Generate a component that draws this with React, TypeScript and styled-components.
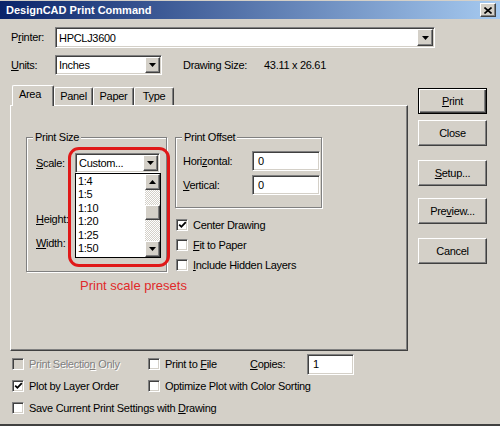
import React from "react";
import styled, { createGlobalStyle, css } from "styled-components";

const FACE = "#d4d0c8";

const GlobalStyle = createGlobalStyle`
  html, body { margin: 0; padding: 0; background: ${FACE}; }
  body {
    font-family: "Liberation Sans", Arial, sans-serif;
    font-size: 11px;
    letter-spacing: -0.3px;
    color: #000;
  }
  * { box-sizing: border-box; }
`;

const raised = css`
  background: ${FACE};
  border: 1px solid;
  border-color: #fff #404040 #404040 #fff;
  box-shadow: inset -1px -1px 0 #808080;
`;

const sunken = css`
  background: #fff;
  border: 1px solid;
  border-color: #808080 #fff #fff #808080;
  box-shadow: inset 1px 1px 0 #404040, inset -1px -1px 0 ${FACE};
`;

const Window = styled.div`
  width: 500px;
  height: 426px;
  display: flex;
  flex-direction: column;
  background: ${FACE};
  padding-top: 1px;
  border-bottom: 2px solid #404040;
  overflow: hidden;
`;

const TitleBar = styled.div`
  height: 18px;
  flex: none;
  display: flex;
  align-items: center;
  justify-content: space-between;
  padding: 0 4px 0 6px;
  background: linear-gradient(to right, #0a246a, #a6caf0);
  color: #fff;
  font-weight: bold;
  font-size: 11px;
  letter-spacing: 0;
`;

const CloseBtn = styled.div`
  ${raised};
  width: 16px;
  height: 14px;
  display: flex;
  align-items: center;
  justify-content: center;
`;

const Content = styled.div`
  display: flex;
  flex-direction: column;
  padding: 8px 0 0 10px;
`;

const FieldRow = styled.div<{ $h: number; $mt?: number }>`
  display: flex;
  align-items: center;
  height: ${(p) => p.$h}px;
  margin-top: ${(p) => p.$mt ?? 0}px;
`;

const Label = styled.span<{ $w?: number; $ml?: number; $disabled?: boolean }>`
  display: inline-block;
  flex: none;
  width: ${(p) => (p.$w ? `${p.$w}px` : "auto")};
  margin-left: ${(p) => p.$ml ?? 0}px;
  white-space: nowrap;
  line-height: 13px;
  ${(p) =>
    p.$disabled &&
    css`
      color: #808080;
      text-shadow: 1px 1px 0 #fff;
    `}
`;

const Key = styled.span`
  text-decoration: underline;
`;

const Combo = styled.div<{ $w: number; $h: number }>`
  ${sunken};
  position: relative;
  flex: none;
  width: ${(p) => p.$w}px;
  height: ${(p) => p.$h}px;
  padding: 1px;
  display: flex;
  align-items: stretch;
`;

const ComboText = styled.div`
  flex: 1;
  display: flex;
  align-items: center;
  padding-left: 2px;
  white-space: nowrap;
`;

const ArrowBtn = styled.div<{ $w?: number }>`
  ${raised};
  flex: none;
  width: ${(p) => p.$w ?? 16}px;
  display: flex;
  align-items: center;
  justify-content: center;
`;

const TextBox = styled.div<{ $w: number; $h: number }>`
  ${sunken};
  flex: none;
  width: ${(p) => p.$w}px;
  height: ${(p) => p.$h}px;
  padding-left: 5px;
  display: flex;
  align-items: center;
`;

const MainRow = styled.div`
  display: flex;
  margin-top: 10px;
`;

const TabControl = styled.div`
  width: 398px;
  display: flex;
  flex-direction: column;
`;

const TabStrip = styled.div`
  height: 20px;
  display: flex;
  align-items: flex-end;
  padding-left: 2px;
`;

const Tab = styled.div<{ $active?: boolean; $w: number }>`
  position: relative;
  z-index: ${(p) => (p.$active ? 2 : 1)};
  width: ${(p) => p.$w}px;
  height: ${(p) => (p.$active ? 21 : 18)}px;
  margin-bottom: ${(p) => (p.$active ? -1 : 0)}px;
  background: ${FACE};
  border: 1px solid;
  border-color: #fff #404040 transparent #fff;
  border-bottom: none;
  border-radius: 2px 2px 0 0;
  box-shadow: inset -1px 0 0 #808080;
  padding: 2px ${(p) => (p.$active ? 6 : 0)}px 0 0;
  text-align: center;
  line-height: 13px;
`;

const TabPanel = styled.div`
  height: 246px;
  background: ${FACE};
  border: 1px solid;
  border-color: #fff #404040 #404040 #fff;
  box-shadow: inset -1px -1px 0 #808080;
  padding: 31px 0 0 15px;
  display: flex;
  flex-direction: column;
`;

const GroupsRow = styled.div`
  display: flex;
  align-items: flex-start;
  gap: 8px;
`;

const Group = styled.div<{ $w: number; $h?: number; $pad: string }>`
  position: relative;
  width: ${(p) => p.$w}px;
  height: ${(p) => (p.$h ? `${p.$h}px` : "auto")};
  border: 1px solid #808080;
  box-shadow: 1px 1px 0 #fff, inset 1px 1px 0 #fff;
  padding: ${(p) => p.$pad};
  display: flex;
  flex-direction: column;
`;

const Legend = styled.span`
  position: absolute;
  top: -7px;
  left: 6px;
  padding: 0 2px;
  background: ${FACE};
  line-height: 13px;
  white-space: nowrap;
`;

const Column = styled.div`
  display: flex;
  flex-direction: column;
`;

const CheckList = styled.div<{ $mt: number; $ml: number }>`
  display: flex;
  flex-direction: column;
  margin-top: ${(p) => p.$mt}px;
  margin-left: ${(p) => p.$ml}px;
`;

const CheckRow = styled.div<{ $w?: number; $h?: number }>`
  display: flex;
  align-items: center;
  gap: 5px;
  height: ${(p) => p.$h ?? 20}px;
  width: ${(p) => (p.$w ? `${p.$w}px` : "auto")};
  flex: none;
`;

const Box = styled.div<{ $disabled?: boolean }>`
  ${sunken};
  flex: none;
  width: 12px;
  height: 12px;
  background: ${(p) => (p.$disabled ? FACE : "#fff")};
  display: flex;
  align-items: center;
  justify-content: center;
`;

const DropList = styled.div`
  position: absolute;
  z-index: 5;
  top: 19px;
  left: -1px;
  width: 86px;
  height: 85px;
  background: #fff;
  border: 1px solid #000;
  display: flex;
`;

const ListItems = styled.div`
  flex: 1;
  padding: 1px 0 0 2px;
`;

const ListItem = styled.div`
  line-height: 13.4px;
  height: 13.4px;
`;

const ScrollBar = styled.div`
  width: 15px;
  flex: none;
  display: flex;
  flex-direction: column;
`;

const ScrollArrow = styled.div`
  ${raised};
  height: 16px;
  flex: none;
  display: flex;
  align-items: center;
  justify-content: center;
`;

const Track = styled.div<{ $h: number }>`
  height: ${(p) => p.$h}px;
  flex: none;
  background-color: ${FACE};
  background-image: conic-gradient(#fff 25%, ${FACE} 0 50%, #fff 0 75%, ${FACE} 0);
  background-size: 2px 2px;
`;

const Thumb = styled.div`
  ${raised};
  height: 15px;
  flex: none;
`;

const RedRing = styled.div`
  position: absolute;
  z-index: 6;
  left: -8px;
  top: -7px;
  width: 102px;
  height: 120px;
  border: 3px solid #e01818;
  border-radius: 11px;
  pointer-events: none;
`;

const Note = styled.div`
  margin: 3px 0 0 54px;
  font-size: 13px;
  line-height: 16px;
  letter-spacing: 0;
  color: #e02a2a;
`;

const ButtonColumn = styled.div`
  width: 69px;
  margin-left: 10px;
  padding-top: 3px;
  display: flex;
  flex-direction: column;
`;

const Button = styled.div<{ $default?: boolean; $mt?: number }>`
  height: 26px;
  margin-top: ${(p) => p.$mt ?? 0}px;
  display: flex;
  align-items: center;
  justify-content: center;
  background: ${FACE};
  ${(p) =>
    p.$default
      ? css`
          border: 1px solid #000;
          box-shadow: inset 1px 1px 0 #fff, inset -1px -1px 0 #404040,
            inset -2px -2px 0 #808080;
        `
      : css`
          border: 1px solid;
          border-color: #fff #404040 #404040 #fff;
          box-shadow: inset -1px -1px 0 #808080;
        `}
`;

const Bottom = styled.div`
  margin-top: 2px;
  padding-left: 2px;
  display: flex;
  flex-direction: column;
`;

const BottomRow = styled.div`
  display: flex;
  align-items: center;
  height: 22px;
`;

const DownTri = () => (
  <svg width="7" height="4" viewBox="0 0 7 4">
    <path d="M0 0H7L3.5 4Z" fill="#000" />
  </svg>
);

const UpTri = () => (
  <svg width="7" height="4" viewBox="0 0 7 4">
    <path d="M0 4H7L3.5 0Z" fill="#000" />
  </svg>
);

const CheckMark = () => (
  <svg width="9" height="8" viewBox="0 0 9 8">
    <polyline points="1.2,3.6 3.4,5.8 7.8,1.2" fill="none" stroke="#000" strokeWidth="1.8" />
  </svg>
);

const Check: React.FC<{
  checked?: boolean;
  disabled?: boolean;
  w?: number;
  h?: number;
  children: React.ReactNode;
}> = ({ checked, disabled, w, h, children }) => (
  <CheckRow $w={w} $h={h}>
    <Box $disabled={disabled}>{checked && <CheckMark />}</Box>
    <Label $disabled={disabled}>{children}</Label>
  </CheckRow>
);

const scales = ["1:4", "1:5", "1:10", "1:20", "1:25", "1:50"];

export default function App() {
  return (
    <>
      <GlobalStyle />
      <Window>
        <TitleBar>
          <span>DesignCAD Print Command</span>
          <CloseBtn>
            <svg width="8" height="7" viewBox="0 0 8 7">
              <path d="M0.5 0.5L7.5 6.5M7.5 0.5L0.5 6.5" stroke="#000" strokeWidth="1.6" />
            </svg>
          </CloseBtn>
        </TitleBar>
        <Content>
          <FieldRow $h={21}>
            <Label $w={44} $ml={1}>
              P<Key>r</Key>inter:
            </Label>
            <Combo $w={380} $h={21}>
              <ComboText>HPCLJ3600</ComboText>
              <ArrowBtn>
                <DownTri />
              </ArrowBtn>
            </Combo>
          </FieldRow>
          <FieldRow $h={20} $mt={7}>
            <Label $w={44} $ml={1}>
              <Key>U</Key>nits:
            </Label>
            <Combo $w={107} $h={20}>
              <ComboText>Inches</ComboText>
              <ArrowBtn $w={15}>
                <DownTri />
              </ArrowBtn>
            </Combo>
            <Label $w={81} $ml={21}>
              Drawing Size:
            </Label>
            <Label>43.11 x 26.61</Label>
          </FieldRow>
          <MainRow>
            <TabControl>
              <TabStrip>
                <Tab $active $w={42}>Area</Tab>
                <Tab $w={39}>Panel</Tab>
                <Tab $w={41}>Paper</Tab>
                <Tab $w={40}>Type</Tab>
              </TabStrip>
              <TabPanel>
                <GroupsRow>
                  <Group $w={141} $h={135} $pad="15px 0 0 9px">
                    <Legend>Print Size</Legend>
                    <FieldRow $h={20}>
                      <Label $w={39}>
                        <Key>S</Key>cale:
                      </Label>
                      <Combo $w={85} $h={20}>
                        <ComboText>Custom...</ComboText>
                        <ArrowBtn $w={15}>
                          <DownTri />
                        </ArrowBtn>
                        <DropList>
                          <ListItems>
                            {scales.map((s) => (
                              <ListItem key={s}>{s}</ListItem>
                            ))}
                          </ListItems>
                          <ScrollBar>
                            <ScrollArrow>
                              <UpTri />
                            </ScrollArrow>
                            <Track $h={15} />
                            <Thumb />
                            <Track $h={21} />
                            <ScrollArrow>
                              <DownTri />
                            </ScrollArrow>
                          </ScrollBar>
                        </DropList>
                        <RedRing />
                      </Combo>
                    </FieldRow>
                    <FieldRow $h={20} $mt={36}>
                      <Label>
                        <Key>H</Key>eight:
                      </Label>
                    </FieldRow>
                    <FieldRow $h={20} $mt={4}>
                      <Label>
                        <Key>W</Key>idth:
                      </Label>
                    </FieldRow>
                  </Group>
                  <Column>
                    <Group $w={147} $pad="13px 0 12px 7px">
                      <Legend>Print Offset</Legend>
                      <FieldRow $h={20}>
                        <Label $w={69}>
                          Hori<Key>z</Key>ontal:
                        </Label>
                        <TextBox $w={68} $h={20}>0</TextBox>
                      </FieldRow>
                      <FieldRow $h={20} $mt={4}>
                        <Label $w={69}>
                          <Key>V</Key>ertical:
                        </Label>
                        <TextBox $w={68} $h={20}>0</TextBox>
                      </FieldRow>
                    </Group>
                    <CheckList $mt={7} $ml={1}>
                      <Check checked>
                        Center Drawin<Key>g</Key>
                      </Check>
                      <Check>
                        <Key>F</Key>it to Paper
                      </Check>
                      <Check>
                        <Key>I</Key>nclude Hidden Layers
                      </Check>
                    </CheckList>
                  </Column>
                </GroupsRow>
                <Note>Print scale presets</Note>
              </TabPanel>
            </TabControl>
            <ButtonColumn>
              <Button $default>
                <span>
                  <Key>P</Key>rint
                </span>
              </Button>
              <Button $mt={6}>Close</Button>
              <Button $mt={14}>
                <span>
                  <Key>S</Key>etup...
                </span>
              </Button>
              <Button $mt={12}>
                <span>
                  Pre<Key>v</Key>iew...
                </span>
              </Button>
              <Button $mt={14}>Cancel</Button>
            </ButtonColumn>
          </MainRow>
          <Bottom>
            <BottomRow>
              <Check disabled w={136} h={22}>
                Print Selectio<Key>n</Key> Only
              </Check>
              <Check w={102} h={22}>
                Print to <Key>F</Key>ile
              </Check>
              <Label $w={57}>
                <Key>C</Key>opies:
              </Label>
              <TextBox $w={47} $h={21}>1</TextBox>
            </BottomRow>
            <BottomRow>
              <Check checked w={136} h={22}>
                Plot by Layer Order
              </Check>
              <Check h={22}>Optimize Plot with Color Sorting</Check>
            </BottomRow>
            <BottomRow>
              <Check h={22}>
                Save Current Print Settings with <Key>D</Key>rawing
              </Check>
            </BottomRow>
          </Bottom>
        </Content>
      </Window>
    </>
  );
}
